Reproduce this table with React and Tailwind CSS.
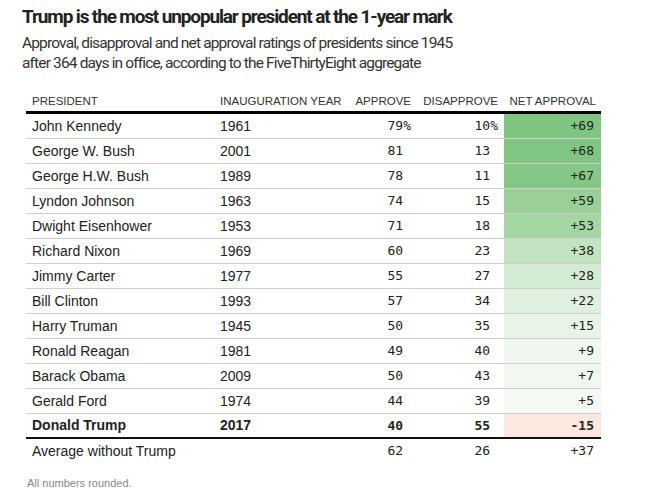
import React from "react";

const rows = [
  { name: "John Kennedy", year: "1961", approve: "79", dis: "10", net: "+69", bg: "bg-[#7fc481]", pct: true },
  { name: "George W. Bush", year: "2001", approve: "81", dis: "13", net: "+68", bg: "bg-[#81c583]" },
  { name: "George H.W. Bush", year: "1989", approve: "78", dis: "11", net: "+67", bg: "bg-[#84c786]" },
  { name: "Lyndon Johnson", year: "1963", approve: "74", dis: "15", net: "+59", bg: "bg-[#98d098]" },
  { name: "Dwight Eisenhower", year: "1953", approve: "71", dis: "18", net: "+53", bg: "bg-[#a4d6a4]" },
  { name: "Richard Nixon", year: "1969", approve: "60", dis: "23", net: "+38", bg: "bg-[#c3e3c2]" },
  { name: "Jimmy Carter", year: "1977", approve: "55", dis: "27", net: "+28", bg: "bg-[#d4ebd3]" },
  { name: "Bill Clinton", year: "1993", approve: "57", dis: "34", net: "+22", bg: "bg-[#dff0de]" },
  { name: "Harry Truman", year: "1945", approve: "50", dis: "35", net: "+15", bg: "bg-[#e9f4e8]" },
  { name: "Ronald Reagan", year: "1981", approve: "49", dis: "40", net: "+9", bg: "bg-[#eff7ee]" },
  { name: "Barack Obama", year: "2009", approve: "50", dis: "43", net: "+7", bg: "bg-[#f2f8f1]" },
  { name: "Gerald Ford", year: "1974", approve: "44", dis: "39", net: "+5", bg: "bg-[#f4f9f3]" },
  { name: "Donald Trump", year: "2017", approve: "40", dis: "55", net: "-15", bg: "bg-[#fbe8de]", bold: true },
];

const grid = "grid grid-cols-[188px_141px_62px_87px_97px]";
const mono = "font-['DejaVu_Sans_Mono',monospace] text-[13px]";

function Pct({ show }) {
  return <span className={show ? "" : "invisible"}>%</span>;
}

export default function App() {
  return (
    <div className="w-[651px] h-[493px] bg-white font-['Liberation_Sans',Arial,sans-serif] text-[#222] pl-[22px] pt-[4px]">
      <h1 className="font-['Roboto',sans-serif] font-bold text-[19px] leading-[26px] tracking-[-0.06em] text-[#222]">
        Trump is the most unpopular president at the 1-year mark
      </h1>
      <p className="font-['Roboto',sans-serif] text-[15.5px] leading-[20px] tracking-[-0.055em] text-[#333] mt-[3px]">
        Approval, disapproval and net approval ratings of presidents since 1945
        <br />
        after 364 days in office, according to the FiveThirtyEight aggregate
      </p>
      <div className="ml-[4px] mt-[20px] w-[575px]">
        <div className={`${grid} text-[11.5px] uppercase text-[#333] h-[21px] items-start border-b-[3px] border-black`}>
          <div className="pl-[6px]">President</div>
          <div className="pl-[6px]">Inauguration year</div>
          <div className="text-right pr-[6px]">Approve</div>
          <div className="text-right pr-[6px]">Disapprove</div>
          <div className="text-right pr-[5px]">Net approval</div>
        </div>
        {rows.map((r) => (
          <div
            key={r.name}
            className={`${grid} h-[25px] items-stretch text-[14px] ${r.bold ? "font-bold border-b-[2px] border-[#111]" : "border-b border-[#cfcfcf]"}`}
          >
            <div className="pl-[6px] flex items-center">{r.name}</div>
            <div className="pl-[6px] flex items-center">{r.year}</div>
            <div className={`${mono} flex items-center justify-end pr-[6px]`}>
              {r.approve}
              <Pct show={r.pct} />
            </div>
            <div className={`${mono} flex items-center justify-end pr-[6px]`}>
              {r.dis}
              <Pct show={r.pct} />
            </div>
            <div className={`${mono} ${r.bg} flex items-center justify-end pr-[7px]`}>{r.net}</div>
          </div>
        ))}
        <div className={`${grid} h-[24px] items-center text-[14px]`}>
          <div className="pl-[6px]">Average without Trump</div>
          <div />
          <div className={`${mono} text-right pr-[6px]`}>
            62
            <Pct show={false} />
          </div>
          <div className={`${mono} text-right pr-[6px]`}>
            26
            <Pct show={false} />
          </div>
          <div className={`${mono} text-right pr-[7px]`}>+37</div>
        </div>
      </div>
      <p className="mt-[12px] ml-[5px] text-[11px] text-[#888]">All numbers rounded.</p>
    </div>
  );
}
